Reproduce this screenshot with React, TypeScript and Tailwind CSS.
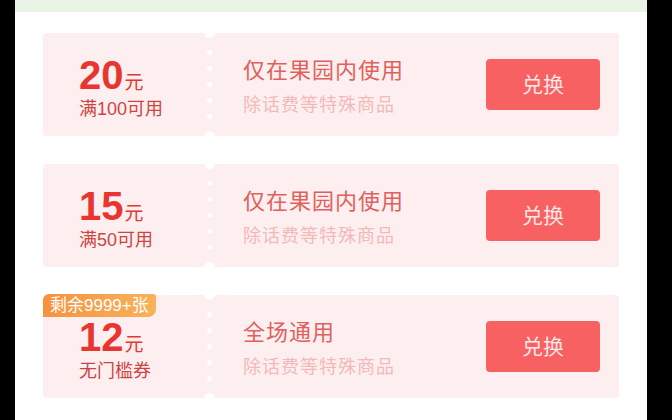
import React from 'react';

type Coupon = {
  amount: string;
  rule: string;
  title: string;
  badge?: string;
};

const coupons: Coupon[] = [
  { amount: '20', rule: '满100可用', title: '仅在果园内使用' },
  { amount: '15', rule: '满50可用', title: '仅在果园内使用' },
  { amount: '12', rule: '无门槛券', title: '全场通用', badge: '剩余9999+张' },
];

const font = { fontFamily: '"Liberation Sans", "Noto Sans CJK SC", sans-serif' };

function CouponCard({ c }: { c: Coupon }) {
  return (
    <div className="relative flex h-[103px] bg-[#fdeff0] rounded-[4px]">
      {c.badge && (
        <div className="absolute left-0 top-[-1px] h-[23px] px-[7px] flex items-center rounded-tl-[6px] rounded-br-[8px] rounded-tr-[3px] bg-gradient-to-r from-[#f5923f] to-[#f8b25a] text-white text-[17px] leading-none">
          {c.badge}
        </div>
      )}

      {/* 左侧金额 */}
      <div className="w-[166px] flex flex-col justify-center pl-[36px] pt-[4px]">
        <div className="flex items-end leading-none text-[#e8352f]">
          <span className="text-[40px] font-bold">{c.amount}</span>
          <span className="text-[19px] mb-[3px] ml-[1px]">元</span>
        </div>
        <div className="text-[18px] leading-none mt-[5px] text-[#cc4442]">{c.rule}</div>
      </div>

      {/* 齿孔分割线 */}
      <div className="absolute left-[161px] top-[-6px] w-[11px] h-[11px] rounded-full bg-white" />
      <div className="absolute left-[161px] bottom-[-6px] w-[11px] h-[11px] rounded-full bg-white" />
      <div className="absolute left-[164px] top-[17px] flex flex-col gap-[11px]">
        {[0, 1, 2, 3, 4].map(i => (
          <div key={i} className="w-[5px] h-[5px] rounded-full bg-white/90" />
        ))}
      </div>

      {/* 右侧说明 */}
      <div className="flex-1 flex items-center pl-[34px] pr-[19px]">
        <div className="flex-1 pt-[4px]">
          <div className="text-[22px] leading-none text-[#e0615c] tracking-[1px]">{c.title}</div>
          <div className="text-[18px] leading-none mt-[14px] text-[#f3b9b9] tracking-[1px]">除话费等特殊商品</div>
        </div>
        <button className="w-[114px] h-[51px] rounded-[4px] bg-[#f76161] text-[#fde7e7] text-[21px] leading-none">
          兑换
        </button>
      </div>
    </div>
  );
}

export default function App() {
  return (
    <div className="flex h-[420px] w-[672px] bg-black overflow-hidden" style={font}>
      <div className="ml-[15px] w-[632px] h-full bg-white">
        <div className="h-[12px] bg-[#e8f4e5]" />
        <div className="flex flex-col gap-[28px] pt-[21px] pl-[28px] pr-[28px]">
          {coupons.map(c => (
            <CouponCard key={c.amount} c={c} />
          ))}
        </div>
      </div>
    </div>
  );
}
